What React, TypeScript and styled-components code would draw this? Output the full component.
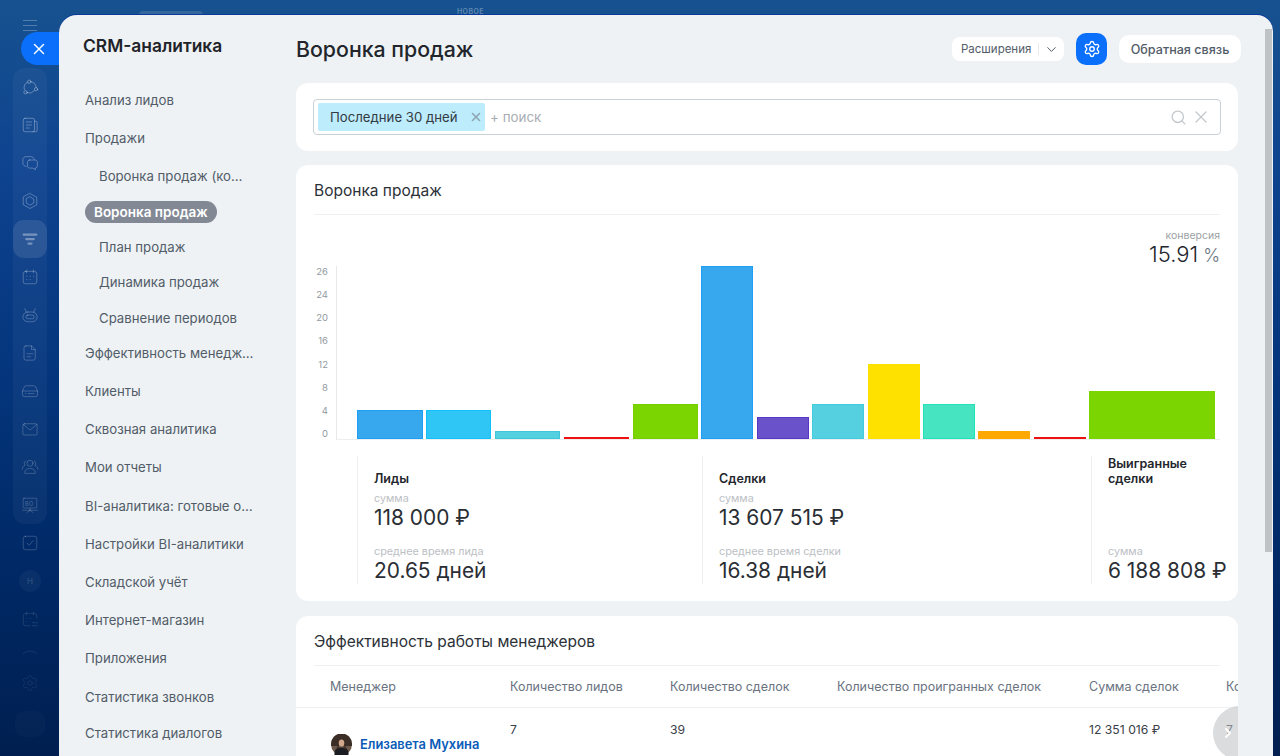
import React from "react";
import styled, { createGlobalStyle } from "styled-components";
import { ChevronDown, ChevronRight, Search, Settings, X } from "lucide-react";

const Global = createGlobalStyle`
  html, body { margin: 0; padding: 0; height: 100%; overflow: hidden; }
  body { font-family: Inter, "Noto Sans", "Liberation Sans", sans-serif; -webkit-font-smoothing: antialiased; }
  #root { height: 100%; }
  * { box-sizing: border-box; }
`;

const Page = styled.div`
  width: 1280px;
  height: 756px;
  display: flex;
  overflow: hidden;
  position: relative;
  background: linear-gradient(180deg, #17528f 0%, #0e4390 22%, #04357c 50%, #002a68 72%, #001f50 100%);
`;

const Rail = styled.nav`
  width: 59px;
  flex: none;
  display: flex;
  flex-direction: column;
  align-items: center;
  padding: 15px 0 0 1px;
  color: #fff;
`;

const Burger = styled.div`
  width: 14px;
  height: 20px;
  display: flex;
  flex-direction: column;
  justify-content: center;
  gap: 4px;
  margin-bottom: 33px;
  i { display: block; height: 1px; background: rgba(255, 255, 255, 0.26); }
`;

const RailGroup = styled.div`
  width: 34px;
  display: flex;
  flex-direction: column;
  align-items: center;
  border-radius: 12px;
  background: rgba(255, 255, 255, 0.04);
`;

const RailItem = styled.div<{ $active?: boolean; $alpha?: number; $h?: number }>`
  width: 34px;
  height: ${(p) => p.$h ?? 38}px;
  display: flex;
  align-items: center;
  justify-content: center;
  border-radius: 11px;
  color: rgba(255, 255, 255, ${(p) => p.$alpha ?? 0.34});
  background: ${(p) => (p.$active ? "rgba(255,255,255,0.1)" : "transparent")};
  svg { width: 18px; height: 18px; fill: none; stroke: currentColor; stroke-width: 1.3; stroke-linecap: round; stroke-linejoin: round; }
`;

const RailBadge = styled.span`
  width: 22px;
  height: 22px;
  border-radius: 50%;
  background: rgba(255, 255, 255, 0.04);
  color: rgba(255, 255, 255, 0.12);
  font-size: 8px;
  font-weight: 700;
  display: flex;
  align-items: center;
  justify-content: center;
`;

const RailGhost = styled.span`
  width: 30px;
  height: 26px;
  border-radius: 9px;
  background: rgba(255, 255, 255, 0.02);
`;

const CloseTab = styled.button`
  position: absolute;
  left: 21px;
  top: 32px;
  width: 38px;
  height: 33px;
  border: 0;
  padding: 0 3px 0 0;
  border-radius: 17px 0 0 17px;
  background: #0a6ffb;
  color: #fff;
  display: flex;
  align-items: center;
  justify-content: center;
  z-index: 2;
`;

const Stage = styled.div`
  flex: 1;
  display: flex;
  flex-direction: column;
  padding-right: 7px;
  min-width: 0;
`;

const TopStrip = styled.div`
  height: 15px;
  flex: none;
  display: flex;
  align-items: flex-end;
  padding-left: 80px;
  overflow: hidden;
`;

const TopPill = styled.span`
  width: 64px;
  height: 4px;
  border-radius: 8px 8px 0 0;
  background: rgba(255, 255, 255, 0.13);
`;

const TopLabel = styled.span`
  margin-left: 254px;
  height: 7px;
  font-size: 7px;
  line-height: 7px;
  font-weight: 600;
  letter-spacing: 0.4px;
  color: rgba(255, 255, 255, 0.32);
`;

const Panel = styled.div`
  flex: 1;
  min-height: 0;
  display: flex;
  position: relative;
  overflow: hidden;
  border-radius: 18px 16px 0 0;
  background: #eef2f4;
  box-shadow: 0 -1px 0 #0a3a96;
`;

const Side = styled.aside`
  width: 237px;
  flex: none;
  padding: 21px 0 0 24px;
`;

const SideTitle = styled.div`
  font-size: 17.4px;
  line-height: 20px;
  font-weight: 600;
  color: #1f2329;
  margin-bottom: 25px;
`;

const MenuItem = styled.div<{ $last?: boolean }>`
  margin-left: 2px;
  height: 38.2px;
  line-height: 38px;
  max-width: 170px;
  font-size: 13.2px;
  color: #525c69;
  white-space: nowrap;
  overflow: hidden;
  text-overflow: ellipsis;
  margin-top: ${(p) => (p.$last ? "-2px" : "0")};
`;

const SubList = styled.div`
  margin: 1.600px 0 -2.600px;
`;

const SubItem = styled.div`
  margin-left: 16px;
  height: 35.5px;
  line-height: 35.5px;
  max-width: 145px;
  font-size: 13.2px;
  color: #525c69;
  white-space: nowrap;
  overflow: hidden;
  text-overflow: ellipsis;
`;

const SubActiveRow = styled.div`
  height: 35.5px;
  margin-left: 2px;
  display: flex;
  align-items: center;
`;

const SubActive = styled.span`
  height: 22px;
  line-height: 22px;
  padding: 0 9px;
  border-radius: 11px;
  background: #828995;
  color: #fff;
  font-size: 13.5px;
  font-weight: 600;
`;

const Main = styled.main`
  flex: 1;
  min-width: 0;
  padding-right: 35px;
`;

const Header = styled.header`
  height: 68px;
  display: flex;
  align-items: center;
  margin-right: -3px;
`;

const PageTitle = styled.h1`
  margin: 0 auto 0 0;
  font-size: 21.3px;
  font-weight: 500;
  color: #22262c;
`;

const Extensions = styled.div`
  width: 112px;
  height: 24px;
  background: #fff;
  border-radius: 8px;
  display: flex;
  align-items: center;
  font-size: 11.5px;
  color: #525c69;
`;

const ExtLabel = styled.span`
  width: 87px;
  padding-left: 9px;
  border-right: 1px solid #e8ebee;
  line-height: 12px;
`;

const ExtArrow = styled.span`
  flex: 1;
  display: flex;
  justify-content: center;
  color: #525c69;
`;

const GearButton = styled.button`
  width: 31px;
  height: 32px;
  margin: 0 12px;
  border: 0;
  padding: 0;
  border-radius: 10px;
  background: #0a6ffb;
  color: #fff;
  display: flex;
  align-items: center;
  justify-content: center;
`;

const Feedback = styled.button`
  width: 122px;
  height: 28px;
  border: 0;
  padding: 0;
  border-radius: 10px;
  background: #fff;
  color: #525c69;
  font: 500 12.6px Inter, sans-serif;
`;

const Card = styled.section<{ $top?: number }>`
  background: #fff;
  border-radius: 12px;
  margin-top: ${(p) => p.$top ?? 0}px;
`;

const FilterCard = styled(Card)`
  height: 68px;
  padding: 16px 17px;
`;

const FilterBox = styled.div`
  height: 36px;
  border: 1px solid #c9d0d6;
  border-radius: 4px;
  padding: 3px 9px 3px 4px;
  display: flex;
  align-items: center;
  color: #c4c8cc;
`;

const Chip = styled.div`
  width: 167px;
  height: 28px;
  border-radius: 2px;
  background: #bdecfd;
  color: #333a42;
  font-size: 13.2px;
  display: flex;
  align-items: center;
  padding: 0 2px 0 12px;
  justify-content: space-between;
`;

const ChipClose = styled.span`
  display: flex;
  color: #8fa6b1;
`;

const SearchHint = styled.span`
  margin: 0 auto 0 5px;
  font-size: 13.4px;
  color: #a8adb3;
`;

const IconSlot = styled.span`
  display: flex;
  margin-left: 4px;
`;

const ChartCard = styled(Card)`
  height: 436px;
  padding: 0 18px;
`;

const CardTitle = styled.div<{ $h: number }>`
  height: ${(p) => p.$h}px;
  padding-top: 16px;
  font-size: 15.5px;
  line-height: 20px;
  color: #2c3138;
  border-bottom: 1px solid #eef0f2;
`;

const Conversion = styled.div`
  height: 44.5px;
  padding-top: 15px;
  text-align: right;
`;

const ConversionLabel = styled.div`
  font-size: 10.5px;
  line-height: 12px;
  color: #9b9fa4;
`;

const ConversionValue = styled.div`
  font-size: 22px;
  line-height: 24px;
  font-weight: 300;
  color: #22262c;
  small { font-size: 18px; color: #6c7682; margin-left: 5px; }
`;

const ChartRow = styled.div`
  display: flex;
`;

const AxisLabels = styled.div`
  width: 14px;
  margin: 0.500px 8px 0 0;
  display: flex;
  flex-direction: column;
  text-align: right;
  font-size: 9.5px;
  line-height: 23.15px;
  color: #9299a2;
`;

const Plot = styled.div`
  flex: 1;
  height: 174px;
  margin-top: 6px;
  padding-left: 20px;
  display: flex;
  align-items: flex-end;
  gap: 3.4px;
  border-left: 1px solid #e6e8ea;
  border-bottom: 1px solid #eceef0;
`;

const Bar = styled.div<{ $w: number; $h: number; $fill: string; $edge: string }>`
  flex: none;
  width: ${(p) => p.$w}px;
  height: ${(p) => p.$h}px;
  background: ${(p) => p.$fill};
  border: 1px solid ${(p) => p.$edge};
`;

const Stats = styled.div`
  margin: 10.500px 0 0 43px;
  display: grid;
  grid-template-columns: 345px 389px 129px;
`;

const Stat = styled.div`
  height: 128px;
  padding-left: 16px;
  border-left: 1px solid #eceef0;
  display: flex;
  flex-direction: column;
  white-space: nowrap;
`;

const StatTitle = styled.div`
  height: 30px;
  display: flex;
  align-items: flex-end;
  font-size: 12.5px;
  line-height: 15px;
  font-weight: 600;
  color: #22262c;
  white-space: normal;
`;

const StatLabel = styled.div<{ $top: string }>`
  margin-top: ${(p) => p.$top};
  font-size: 10.8px;
  line-height: 12px;
  color: #bcc0c4;
`;

const StatValue = styled.div`
  font-size: 20.9px;
  line-height: 26px;
  color: #2a2e34;
`;

const TableCard = styled(Card)`
  height: 200px;
  position: relative;
  overflow: hidden;
`;

const TableTitleWrap = styled.div`
  padding: 0 18px;
`;

const Cols = styled.div`
  display: grid;
  grid-template-columns: 180px 160px 167px 252px 137px 120px;
  padding-left: 34px;
  width: 1100px;
  font-size: 12.5px;
`;

const HeadRow = styled(Cols)`
  height: 42px;
  line-height: 41px;
  color: #6a737f;
  border-bottom: 1px solid #eef0f2;
  width: auto;
`;

const BodyRow = styled(Cols)`
  padding-top: 14px;
  line-height: 16px;
  font-size: 12.2px;
  color: #3a4048;
`;

const ManagerCell = styled.div`
  margin-top: 12px;
  margin-left: 1px;
  display: flex;
  align-items: center;
  gap: 8px;
  font-size: 12.9px;
  font-weight: 600;
  color: #0b5cb8;
  white-space: nowrap;
`;

const ScrollFab = styled.div`
  position: absolute;
  left: 917px;
  top: 90px;
  width: 54px;
  height: 54px;
  border-radius: 50%;
  background: rgba(190, 192, 194, 0.55);
  color: #fff;
  display: flex;
  align-items: center;
  padding-left: 7px;
`;

const ScrollThumb = styled.div`
  position: absolute;
  right: 1px;
  top: 14px;
  width: 7px;
  height: 523px;
  background: #bfc3c5;
`;

const rail: [React.ReactNode, boolean?][] = [
  [<svg viewBox="0 0 24 24"><circle cx="11" cy="5" r="2.200" /><circle cx="6" cy="19" r="2.200" /><circle cx="20" cy="15" r="2.200" /><path d="M8.800 5.500A8.500 8.500 0 0 0 4.500 15.500M8.300 19.800A8.500 8.500 0 0 0 17.800 16.800M13.300 5A8.500 8.500 0 0 1 20.300 12.700" /></svg>],
  [<svg viewBox="0 0 24 24"><rect x="3" y="3" width="15" height="18" rx="2.500" /><path d="M18 7h1.500a2 2 0 0 1 2 2v10a2 2 0 0 1-2 2H16M7 8h7M7 12h7M7 16h4" /></svg>],
  [<svg viewBox="0 0 24 24"><path d="M7 16.500C4.500 16.500 2.500 15 2.500 12V7.500C2.500 5 4.500 3.500 7 3.500h6c2.500 0 4 1.500 4.500 3.500" /><path d="M11.500 8h7.500c1.500 0 2.800 1.200 2.800 2.800v5.200c0 1.500-1.300 2.800-2.800 2.800v2.200l-3-2.200h-4.500c-1.500 0-2.800-1.300-2.800-2.800v-5.200C8.700 9.200 10 8 11.500 8z" /></svg>],
  [<svg viewBox="0 0 24 24"><path d="M12 2l9 5v10l-9 5-9-5V7z" /><path d="M12 6.500l5 2.800v5.400l-5 2.800-5-2.800V9.300z" /></svg>],
  [<svg viewBox="0 0 24 24"><path strokeWidth="3" d="M3.500 6h17M7 12h10M10 18h4" /></svg>, true],
  [<svg viewBox="0 0 24 24"><rect x="3" y="4.500" width="18" height="16.500" rx="3" /><path d="M7.500 2.500v4M16.500 2.500v4M7.500 11h.5M12 11h.5M16.500 11h.5M7.500 15.500h.5M12 15.500h.5" /></svg>],
  [<svg viewBox="0 0 24 24"><rect x="2.500" y="8" width="19" height="13" rx="6.500" /><rect x="6.500" y="12" width="11" height="5" rx="2.500" /><path d="M7 8 5 3.500M17 8l2-4.500" /></svg>],
  [<svg viewBox="0 0 24 24"><path d="M6.500 2.500H14l5 5v11.500a2.500 2.500 0 0 1-2.500 2.500h-10A2.500 2.500 0 0 1 4 19V5a2.500 2.500 0 0 1 2.500-2.500zM14 2.500V7.500h5M8 13h8M8 17h5" /></svg>],
  [<svg viewBox="0 0 24 24"><path d="M2 12l2.500-5.500A2.500 2.500 0 0 1 7 5h10a2.500 2.500 0 0 1 2.500 1.500L22 12v5a2.500 2.500 0 0 1-2.500 2.500h-15A2.500 2.500 0 0 1 2 17zM2 12h20M6 15.500h.5M9.500 15.500h8" /></svg>],
  [<svg viewBox="0 0 24 24"><rect x="2.500" y="5" width="19" height="15" rx="2" /><path d="M3 6l9 7.500L21 6" /></svg>],
  [<svg viewBox="0 0 24 24"><circle cx="12" cy="7" r="4" /><path d="M5 20v-1c0-3 3-5 7-5s7 2 7 5v1zM6.500 4C4 4.500 3.500 8 5.500 9.500 3 10.500 1.500 12.500 1.500 15M17.500 4c2.500.5 3 4 1 5.500 2.500 1 4 3 4 5.500" /></svg>],
  [<svg viewBox="0 0 24 24"><rect x="3" y="3" width="18" height="13" rx="1" /><path d="M2 19h20M12 16v3M12 19l-4 3M12 19l4 3" /><text x="5" y="13" fontSize="8" fontWeight="700" fill="currentColor" stroke="none">BO</text></svg>],
];

const lower: [React.ReactNode, number, number?][] = [
  [<svg viewBox="0 0 24 24"><rect x="3" y="3" width="18" height="18" rx="3" /><path d="M8 12l3 3 5-6" /></svg>, 0.2],
  [<RailBadge>H</RailBadge>, 1],
  [<svg viewBox="0 0 24 24"><path d="M21 11V7.500a3 3 0 0 0-3-3H6a3 3 0 0 0-3 3V18a3 3 0 0 0 3 3h6M7.500 2.500v4M16.500 2.500v4M7.500 11h.5M12 11h.5M7.500 15.500h.5M15 17h7M15 21h7" /></svg>, 0.11],
  [<svg viewBox="0 0 24 24"><path d="M3 13c5-5 13-5 18 0" /></svg>, 0.09, 30],
  [<Settings size={18} strokeWidth={1.3} />, 0.07, 30],
  [<RailGhost />, 1, 52],
];

const bars = [
  { w: 65.5, h: 28.5, fill: "#37a8ee", edge: "#1f9ef5" },
  { w: 65.5, h: 28.5, fill: "#2fc6f6", edge: "#12c0fb" },
  { w: 65.5, h: 8, fill: "#55d0e0", edge: "#3fc5d8" },
  { w: 65.5, h: 2, fill: "#ff2a2a", edge: "#f01010" },
  { w: 65.5, h: 35, fill: "#7bd500", edge: "#77cf00" },
  { w: 52, h: 173, fill: "#37a8ee", edge: "#1f9ef5" },
  { w: 52, h: 22, fill: "#6a52cb", edge: "#5637c5" },
  { w: 52, h: 35, fill: "#55d0e0", edge: "#42cce0" },
  { w: 52, h: 74.5, fill: "#ffe100", edge: "#ffe100" },
  { w: 52, h: 35, fill: "#47e4c2", edge: "#22e2bc" },
  { w: 52, h: 8, fill: "#ffa900", edge: "#ffa900" },
  { w: 52, h: 2, fill: "#ff2a2a", edge: "#f01010" },
  { w: 126, h: 48, fill: "#7bd500", edge: "#7bd500" },
];

const Avatar = () => (
  <svg width="21" height="21" viewBox="0 0 21 21">
    <circle cx="10.500" cy="10.500" r="10.500" fill="#6b5a4c" />
    <path d="M0 10a10.500 10.500 0 0 1 21 0v2H0z" fill="#3a2e26" />
    <ellipse cx="10.500" cy="9" rx="2.800" ry="3.600" fill="#d2a88c" />
    <path d="M3.500 21v-3c1-3.500 3.500-4.500 7-4.500s6 1 7 4.500v3z" fill="#1b1d22" />
    <path d="M7 10c-.5 3-1 4-2 5.500l3-.5zM14 10c.5 3 1 4 2 5.500l-3-.5z" fill="#3a2a20" />
  </svg>
);

export default function App() {
  return (
    <Page>
      <Global />
      <Rail>
        <Burger><i /><i /><i /></Burger>
        <RailGroup>
          {rail.map(([icon, active], i) => (
            <RailItem key={i} $active={active} $alpha={active ? 0.36 : 0.32 - i * 0.012}>{icon}</RailItem>
          ))}
        </RailGroup>
        {lower.map(([icon, alpha, h], i) => (
          <RailItem key={i} $alpha={alpha} $h={h}>{icon}</RailItem>
        ))}
      </Rail>
      <CloseTab aria-label="Закрыть"><X size={18} strokeWidth={1.9} /></CloseTab>
      <Stage>
        <TopStrip>
          <TopPill />
          <TopLabel>НОВОЕ</TopLabel>
        </TopStrip>
        <Panel>
          <Side>
            <SideTitle>CRM-аналитика</SideTitle>
            <MenuItem>Анализ лидов</MenuItem>
            <MenuItem>Продажи</MenuItem>
            <SubList>
              <SubItem>Воронка продаж (конверсия)</SubItem>
              <SubActiveRow><SubActive>Воронка продаж</SubActive></SubActiveRow>
              <SubItem>План продаж</SubItem>
              <SubItem>Динамика продаж</SubItem>
              <SubItem>Сравнение периодов</SubItem>
            </SubList>
            <MenuItem>Эффективность менеджеров</MenuItem>
            <MenuItem>Клиенты</MenuItem>
            <MenuItem>Сквозная аналитика</MenuItem>
            <MenuItem>Мои отчеты</MenuItem>
            <MenuItem>BI-аналитика: готовые отчеты</MenuItem>
            <MenuItem>Настройки BI-аналитики</MenuItem>
            <MenuItem>Складской учёт</MenuItem>
            <MenuItem>Интернет-магазин</MenuItem>
            <MenuItem>Приложения</MenuItem>
            <MenuItem>Статистика звонков</MenuItem>
            <MenuItem $last>Статистика диалогов</MenuItem>
          </Side>
          <Main>
            <Header>
              <PageTitle>Воронка продаж</PageTitle>
              <Extensions>
                <ExtLabel>Расширения</ExtLabel>
                <ExtArrow><ChevronDown size={15} strokeWidth={1.6} /></ExtArrow>
              </Extensions>
              <GearButton aria-label="Настройки"><Settings size={18} strokeWidth={1.8} /></GearButton>
              <Feedback>Обратная связь</Feedback>
            </Header>
            <FilterCard>
              <FilterBox>
                <Chip>
                  Последние 30 дней
                  <ChipClose><X size={14} strokeWidth={2.8} /></ChipClose>
                </Chip>
                <SearchHint>+ поиск</SearchHint>
                <IconSlot><Search size={17} strokeWidth={1.9} /></IconSlot>
                <IconSlot><X size={20} strokeWidth={1.5} /></IconSlot>
              </FilterBox>
            </FilterCard>
            <ChartCard $top={14}>
              <CardTitle $h={50}>Воронка продаж</CardTitle>
              <Conversion>
                <ConversionLabel>конверсия</ConversionLabel>
                <ConversionValue>15.91<small>%</small></ConversionValue>
              </Conversion>
              <ChartRow>
                <AxisLabels>
                  {[26, 24, 20, 16, 12, 8, 4, 0].map((n) => <span key={n}>{n}</span>)}
                </AxisLabels>
                <Plot>
                  {bars.map((b, i) => <Bar key={i} $w={b.w} $h={b.h} $fill={b.fill} $edge={b.edge} />)}
                </Plot>
              </ChartRow>
              <Stats>
                <Stat>
                  <StatTitle>Лиды</StatTitle>
                  <StatLabel $top="7px">сумма</StatLabel>
                  <StatValue>118 000 ₽</StatValue>
                  <StatLabel $top="15px">среднее время лида</StatLabel>
                  <StatValue>20.65 дней</StatValue>
                </Stat>
                <Stat>
                  <StatTitle>Сделки</StatTitle>
                  <StatLabel $top="7px">сумма</StatLabel>
                  <StatValue>13 607 515 ₽</StatValue>
                  <StatLabel $top="15px">среднее время сделки</StatLabel>
                  <StatValue>16.38 дней</StatValue>
                </Stat>
                <Stat>
                  <StatTitle>Выигранные сделки</StatTitle>
                  <StatLabel $top="auto">сумма</StatLabel>
                  <StatValue>6 188 808 ₽</StatValue>
                </Stat>
              </Stats>
            </ChartCard>
            <TableCard $top={15}>
              <TableTitleWrap>
                <CardTitle $h={50}>Эффективность работы менеджеров</CardTitle>
              </TableTitleWrap>
              <HeadRow>
                <span>Менеджер</span>
                <span>Количество лидов</span>
                <span>Количество сделок</span>
                <span>Количество проигранных сделок</span>
                <span>Сумма сделок</span>
                <span>Конверсия</span>
              </HeadRow>
              <BodyRow>
                <ManagerCell><Avatar />Елизавета Мухина</ManagerCell>
                <span>7</span>
                <span>39</span>
                <span />
                <span>12 351 016 ₽</span>
                <span>7</span>
              </BodyRow>
              <ScrollFab><ChevronRight size={16} strokeWidth={3} /></ScrollFab>
            </TableCard>
          </Main>
          <ScrollThumb />
        </Panel>
      </Stage>
    </Page>
  );
}
